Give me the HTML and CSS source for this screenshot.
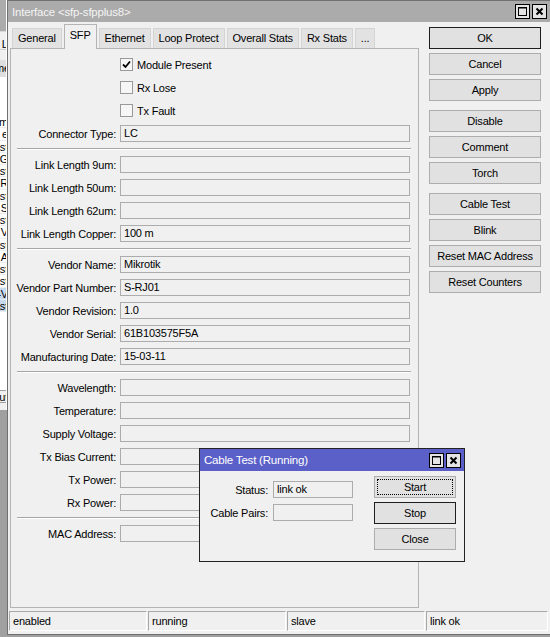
FILE: index.html
```html
<!DOCTYPE html>
<html>
<head>
<meta charset="utf-8">
<link rel="stylesheet" href="styles.css">
</head>
<body>
<div class="bgwin">
  <div class="bg-title"></div>
  <div class="bg-toolbar"><span class="bg-txt">Li</span></div>
  <div class="bg-gap"></div>
  <div class="bg-head"><span class="bg-txt">Name</span></div>
  <div class="bg-list">
    <div class="bg-blank"></div>
    <div class="bg-row">m</div>
    <div class="bg-row">e</div>
    <div class="bg-row">st</div>
    <div class="bg-row">G</div>
    <div class="bg-row">st</div>
    <div class="bg-row">R</div>
    <div class="bg-row">st</div>
    <div class="bg-row">S</div>
    <div class="bg-row">st</div>
    <div class="bg-row">V</div>
    <div class="bg-row">st</div>
    <div class="bg-row">A</div>
    <div class="bg-row">st</div>
    <div class="bg-row">st</div>
    <div class="bg-row sel">-V</div>
    <div class="bg-row sel">st</div>
    <div class="bg-fill"></div>
    <div class="bg-foot">ut</div>
  </div>
</div>

<div class="win main">
  <div class="titlebar">
    <span class="title">Interface &lt;sfp-sfpplus8&gt;</span>
    <div class="tbtns">
      <span class="tb"><svg width="13" height="13" viewBox="0 0 13 13"><rect x="2.5" y="2.5" width="8" height="8" fill="none" stroke="#000" stroke-width="1"/><line x1="2.5" y1="3" x2="10.5" y2="3" stroke="#000" stroke-width="1"/></svg></span>
      <span class="tb"><svg width="13" height="13" viewBox="0 0 13 13"><path d="M3.5 3.5 L9.5 9.5 M9.5 3.5 L3.5 9.5" stroke="#000" stroke-width="2"/></svg></span>
    </div>
  </div>
  <div class="win-body">
    <div class="left">
      <div class="tabs">
        <div class="tab">General</div>
        <div class="tab active">SFP</div>
        <div class="tab">Ethernet</div>
        <div class="tab">Loop Protect</div>
        <div class="tab">Overall Stats</div>
        <div class="tab">Rx Stats</div>
        <div class="tab">...</div>
      </div>
      <div class="panel">
        <div class="row"><span></span><label class="chk"><span class="box"><svg width="11" height="11" viewBox="0 0 11 11"><path d="M2 5.5 L4.5 8 L9 2.5" fill="none" stroke="#000" stroke-width="1.8"/></svg></span>Module Present</label></div>
        <div class="row"><span></span><label class="chk"><span class="box"></span>Rx Lose</label></div>
        <div class="row"><span></span><label class="chk"><span class="box"></span>Tx Fault</label></div>
        <div class="row"><span class="lbl">Connector Type:</span><span class="field">LC</span></div>
        <div class="sep"></div>
        <div class="row"><span class="lbl">Link Length 9um:</span><span class="field"></span></div>
        <div class="row"><span class="lbl">Link Length 50um:</span><span class="field"></span></div>
        <div class="row"><span class="lbl">Link Length 62um:</span><span class="field"></span></div>
        <div class="row"><span class="lbl">Link Length Copper:</span><span class="field">100 m</span></div>
        <div class="sep"></div>
        <div class="row"><span class="lbl">Vendor Name:</span><span class="field">Mikrotik</span></div>
        <div class="row"><span class="lbl">Vendor Part Number:</span><span class="field">S-RJ01</span></div>
        <div class="row"><span class="lbl">Vendor Revision:</span><span class="field">1.0</span></div>
        <div class="row"><span class="lbl">Vendor Serial:</span><span class="field">61B103575F5A</span></div>
        <div class="row"><span class="lbl">Manufacturing Date:</span><span class="field">15-03-11</span></div>
        <div class="sep"></div>
        <div class="row"><span class="lbl">Wavelength:</span><span class="field"></span></div>
        <div class="row"><span class="lbl">Temperature:</span><span class="field"></span></div>
        <div class="row"><span class="lbl">Supply Voltage:</span><span class="field"></span></div>
        <div class="row"><span class="lbl">Tx Bias Current:</span><span class="field"></span></div>
        <div class="row"><span class="lbl">Tx Power:</span><span class="field"></span></div>
        <div class="row"><span class="lbl">Rx Power:</span><span class="field"></span></div>
        <div class="sep"></div>
        <div class="row"><span class="lbl">MAC Address:</span><span class="field"></span></div>
      </div>
    </div>
    <div class="buttons">
      <div class="btn default">OK</div>
      <div class="btn">Cancel</div>
      <div class="btn">Apply</div>
      <div class="gap"></div>
      <div class="btn">Disable</div>
      <div class="btn">Comment</div>
      <div class="btn">Torch</div>
      <div class="gap"></div>
      <div class="btn">Cable Test</div>
      <div class="btn">Blink</div>
      <div class="btn">Reset MAC Address</div>
      <div class="btn">Reset Counters</div>
    </div>
  </div>
  <div class="statusbar">
    <div class="cell">enabled</div>
    <div class="cell">running</div>
    <div class="cell">slave</div>
    <div class="cell">link ok</div>
  </div>
</div>

<div class="win dialog">
  <div class="titlebar blue">
    <span class="title">Cable Test (Running)</span>
    <div class="tbtns">
      <span class="tb"><svg width="13" height="13" viewBox="0 0 13 13"><rect x="2.5" y="2.5" width="8" height="8" fill="none" stroke="#000" stroke-width="1"/><line x1="2.5" y1="3" x2="10.5" y2="3" stroke="#000" stroke-width="1"/></svg></span>
      <span class="tb"><svg width="13" height="13" viewBox="0 0 13 13"><path d="M3.5 3.5 L9.5 9.5 M9.5 3.5 L3.5 9.5" stroke="#000" stroke-width="2"/></svg></span>
    </div>
  </div>
  <div class="dlg-body">
    <div class="dlg-fields">
      <div class="drow"><span class="lbl">Status:</span><span class="field">link ok</span></div>
      <div class="drow"><span class="lbl">Cable Pairs:</span><span class="field"></span></div>
    </div>
    <div class="dlg-buttons">
      <div class="btn focus"><span>Start</span></div>
      <div class="btn default">Stop</div>
      <div class="btn">Close</div>
    </div>
  </div>
</div>
</body>
</html>
```

FILE: styles.css
```css
* { box-sizing: border-box; }
html, body { margin: 0; padding: 0; }
body {
  width: 550px;
  height: 637px;
  overflow: hidden;
  position: relative;
  background: #a0a0a0;
  font-family: "Liberation Sans", Arial, sans-serif;
  font-size: 11px;
  letter-spacing: -0.2px;
  color: #000;
}

/* background window (only a sliver visible) */
.bgwin {
  position: absolute;
  left: -93px;
  top: 0;
  width: 100px;
  height: 410px;
  background: #f0f0f0;
  border-right: 1px solid #fff;
  overflow: hidden;
}
.bg-title { height: 32px; background: #ababab; border-bottom: 1px solid #d8d8d8; }
.bg-toolbar { height: 18px; text-align: right; padding-top: 6px; font-size: 11px; line-height: 12px; border-bottom: 1px solid #d0d0d0; }
.bg-txt { margin-right: -4px; }
.bg-gap { height: 10px; }
.bg-head { height: 17px; background: #dedede; text-align: right; line-height: 17px; font-size: 11px; }
.bg-list { background: #fff; }
.bg-blank { height: 39px; }
.bg-row {
  height: 12.25px;
  line-height: 12px;
  text-align: right;
  font-size: 11px;
  margin-right: -2px;
  border-bottom: 1px solid #ececec;
}
.bg-row.sel { background: #c6d9ef; }
.bg-fill { height: 78px; }
.bg-foot { height: 13px; line-height: 13px; text-align: right; background: #f0f0f0; border-top: 1px solid #a0a0a0; border-bottom: 1px solid #a0a0a0; margin-right: -2px; }

/* windows */
.win {
  position: absolute;
  background: #f0f0f0;
}
.main {
  left: 7px;
  top: 0;
  width: 546px;
  height: 635px;
  border: 1px solid #707070;
}
.titlebar {
  height: 21px;
  background: #ababab;
  display: flex;
  align-items: center;
  justify-content: space-between;
  padding: 0 5px 0 4px;
}
.titlebar .title { color: #f4f4f4; font-size: 11.5px; }
.tbtns { display: flex; gap: 2px; }
.tb {
  width: 15px;
  height: 15px;
  border: 1px solid #000;
  background: #e4e4e4;
  display: flex;
  align-items: center;
  justify-content: center;
}

.win-body {
  display: flex;
  height: 586px;
  padding: 2px 0 0 2px;
}
.left { width: 409px; display: flex; flex-direction: column; }
.tabs {
  display: flex;
  align-items: flex-end;
  gap: 2px;
  height: 24px;
  padding-left: 2px;
  position: relative;
  z-index: 1;
}
.tab {
  height: 20px;
  padding: 0 5px;
  line-height: 19px;
  background: #e2e2e2;
  border: 1px solid #d4d4d4;
  border-bottom: none;
  white-space: nowrap;
}
.tab.active {
  height: 25px;
  margin-bottom: -1px;
  background: #f0f0f0;
  border-color: #b4b4b4;
  line-height: 20px;
  padding-bottom: 4px;
}
.panel {
  height: 560px;
  border: 1px solid #b4b4b4;
  padding-top: 4px;
}
.row {
  display: grid;
  grid-template-columns: 105px 290px;
  column-gap: 4px;
  height: 23px;
  align-items: center;
}
.lbl { text-align: right; white-space: nowrap; }
.field {
  height: 17px;
  border: 1px solid #acacac;
  background: #f0f0f0;
  padding-left: 3px;
  line-height: 15px;
  white-space: nowrap;
}
.chk { display: flex; align-items: center; gap: 4px; }
.box {
  width: 13px;
  height: 13px;
  border: 1px solid #999;
  background: #f6f6f6;
  display: flex;
  align-items: center;
  justify-content: center;
}
.sep {
  height: 8px;
  display: flex;
  align-items: center;
  padding: 0 7px 0 6px;
}
.sep::before {
  content: "";
  flex: 1;
  border-top: 1px solid #a6a6a6;
  border-bottom: 1px solid #fff;
}

.buttons {
  margin-left: 10px;
  width: 112px;
  padding-top: 3px;
  display: flex;
  flex-direction: column;
  gap: 4px;
}
.buttons .gap { height: 1px; }
.btn {
  height: 22px;
  border: 1px solid #adadad;
  background: #e1e1e1;
  display: flex;
  align-items: center;
  justify-content: center;
  white-space: nowrap;
}
.btn.default { border-color: #1e1e1e; }
.btn.focus { padding: 2px; }
.btn.focus span {
  flex: 1;
  align-self: stretch;
  display: flex;
  align-items: center;
  justify-content: center;
  border: 1px dotted #000;
}

.statusbar {
  margin-top: 3px;
  display: grid;
  grid-template-columns: 138px 138px 138px 122px;
  gap: 1px;
  padding-left: 1px;
}
.cell {
  height: 20px;
  border: 1px solid #a8a8a8;
  border-right-color: #fff;
  border-bottom-color: #fff;
  padding-left: 3px;
  line-height: 18px;
}

/* dialog */
.dialog {
  left: 199px;
  top: 448px;
  width: 266px;
  height: 114px;
  border: 1px solid #222;
}
.titlebar.blue { height: 22px; background: #5b60c8; padding: 0 3px 0 4px; }
.titlebar.blue .title { color: #fff; }
.dlg-body { display: flex; }
.dlg-fields { padding-top: 7px; }
.drow {
  display: grid;
  grid-template-columns: 68px 80px;
  column-gap: 5px;
  height: 23px;
  align-items: center;
}
.dlg-buttons {
  margin-left: 21px;
  width: 82px;
  padding-top: 5px;
  display: flex;
  flex-direction: column;
  gap: 4px;
}
```
